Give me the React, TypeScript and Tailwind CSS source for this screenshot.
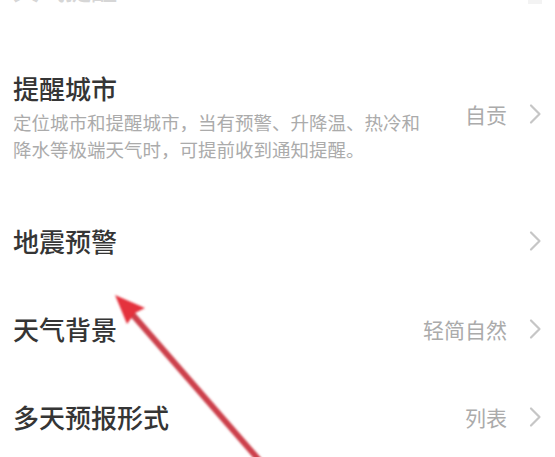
import React from 'react';

const font = { fontFamily: '"Noto Sans CJK SC", "Noto Sans", sans-serif' };

function Chevron() {
  return (
    <svg width="14" height="22" viewBox="0 0 14 22" className="shrink-0">
      <path d="M3 2.5 L11.5 11 L3 19.5" fill="none" stroke="#c6c6c6" strokeWidth="2.2" strokeLinecap="round" strokeLinejoin="round" />
    </svg>
  );
}

function Row({ title, value }: { title: string; value?: string }) {
  return (
    <div className="flex h-[88px] items-center justify-between pl-[13px] pr-[13px]">
      <span className="text-[26px] leading-[30px] font-medium text-[#353535]">{title}</span>
      <div className="flex items-center gap-[21px]">
        {value && <span className="text-[21px] leading-[26px] text-[#ababab]">{value}</span>}
        <Chevron />
      </div>
    </div>
  );
}

function Arrow() {
  return (
    <svg className="pointer-events-none absolute left-0 top-0" width="555" height="457" viewBox="0 0 555 457">
      <defs>
        <filter id="soft" x="-10%" y="-10%" width="120%" height="120%">
          <feGaussianBlur stdDeviation="0.8" />
        </filter>
      </defs>
      <g filter="url(#soft)">
        <line x1="126" y1="307" x2="266" y2="468" stroke="#cc414b" strokeWidth="6" strokeLinecap="round" />
        <path d="M115 295 L145 308 L135 313 L127 324 Z" fill="#e4323d" />
      </g>
    </svg>
  );
}

export default function App() {
  return (
    <div className="relative h-[457px] w-[555px] overflow-hidden bg-white" style={font}>
      <div className="flex h-[4px] items-end justify-between overflow-hidden px-[13px]">
        <span className="text-[26px] leading-[30px] font-medium text-[#d6d6d6]">天气提醒</span>
        <div className="h-[4px] w-[14px] bg-[#f3f3f3]" />
      </div>

      <div className="flex items-center justify-between pl-[13px] pr-[13px] pt-[69px] pb-[34px]">
        <div className="flex flex-col">
          <span className="text-[26px] leading-[30px] font-medium text-[#353535]">提醒城市</span>
          <div className="mt-[6px] text-[18.5px] leading-[27px] text-[#ababab]">
            <div>定位城市和提醒城市，当有预警、升降温、热冷和</div>
            <div>降水等极端天气时，可提前收到通知提醒。</div>
          </div>
        </div>
        <div className="mb-[8px] flex items-center gap-[21px]">
          <span className="text-[21px] leading-[26px] text-[#ababab]">自贡</span>
          <Chevron />
        </div>
      </div>

      <Row title="地震预警" />
      <Row title="天气背景" value="轻简自然" />
      <Row title="多天预报形式" value="列表" />

      <Arrow />
    </div>
  );
}
